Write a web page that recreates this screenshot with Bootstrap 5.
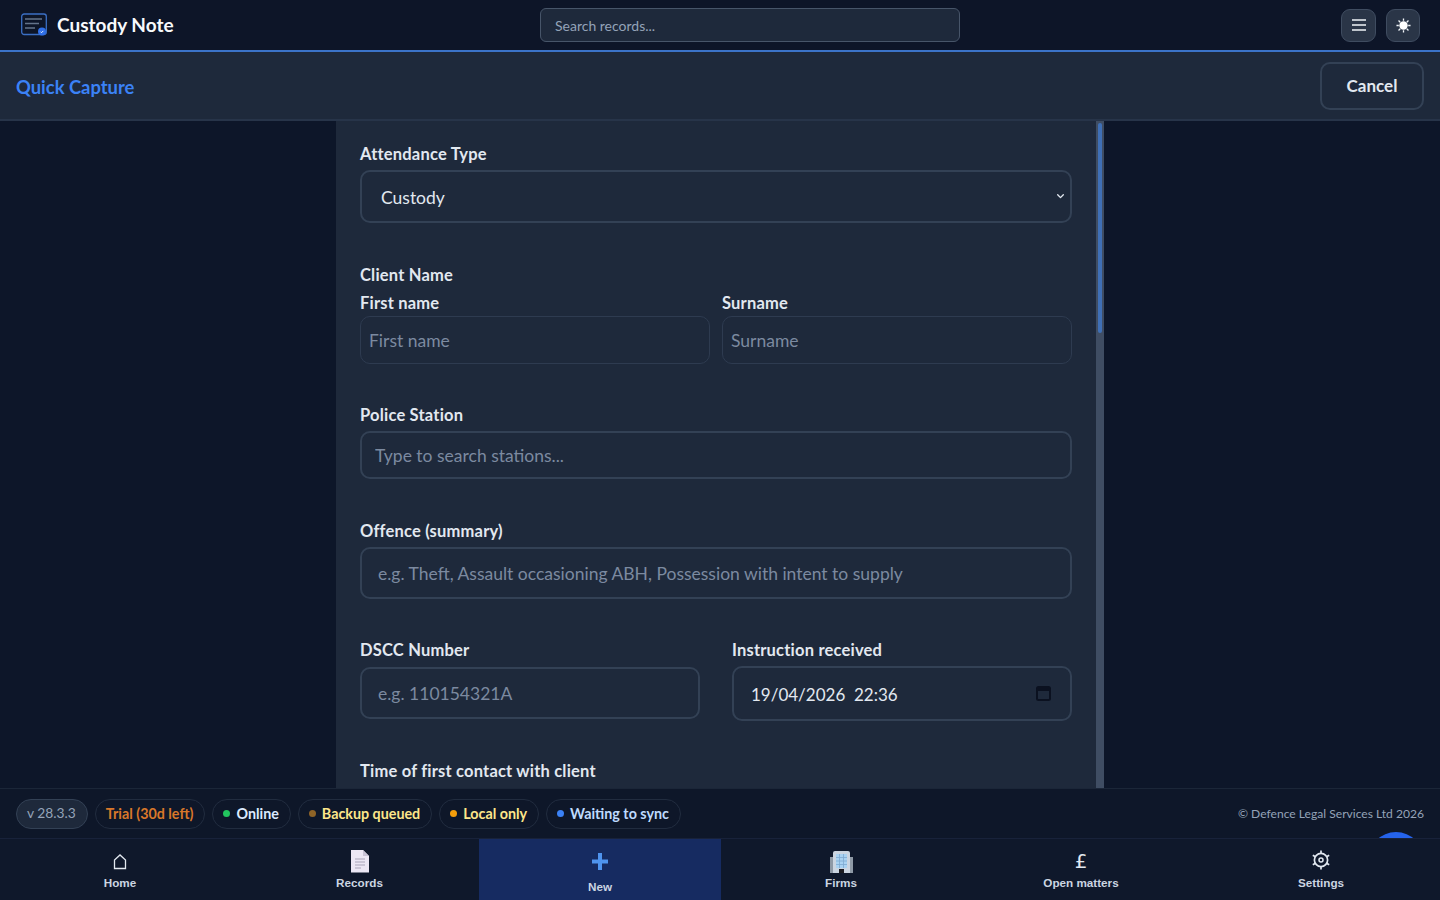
<!DOCTYPE html>
<html lang="en">
<head>
  <meta charset="UTF-8">
  <title>Custody Note</title>
  <link href="https://cdn.jsdelivr.net/npm/bootstrap@5.3.3/dist/css/bootstrap.min.css" rel="stylesheet">
  <style>
    html, body { height: 100%; }
    body { background: #0f172a; color: #e2e8f0; font-family: "Lato", "Noto Sans", sans-serif; overflow: hidden; }
    .app-shell { height: 100vh; }

    .top-bar { height: 52px; background: #0d1528; border-bottom: 2px solid #3b73c8; padding: 0 20px 0 21px; flex: none; }
    .brand-name { font-size: 19px; font-weight: 700; color: #f8fafc; margin-left: 10px; }
    .search-box { width: 420px; height: 34px; background: #1e293b; border: 1px solid #475569; border-radius: 6px; color: #e2e8f0; font-size: 14px; padding: 0 14px; }
    .search-box::placeholder { color: #94a3b8; opacity: 1; }
    .search-box:focus { background: #1e293b; color: #e2e8f0; }
    .top-actions { gap: 10px; }
    .icon-btn { width: 35px; height: 33px; background: #2a3547; border: 1px solid #3f4c60; border-radius: 9px; padding: 0; }
    .theme-btn { width: 34px; }

    .capture-bar { height: 69px; background: #1e293b; border-bottom: 2px solid #273449; padding: 3px 16px 0; flex: none; }
    .capture-title { font-size: 18.400px; font-weight: 700; color: #3b82f6; margin: 0; }
    .cancel-btn { width: 104px; height: 48px; border: 2px solid #334155; border-radius: 10px; color: #e2e8f0; font-size: 17px; font-weight: 700; background: transparent; margin-top: -3px; }

    .work-area { min-height: 0; background: #0d1629; }
    .form-column { width: 768px; margin: 0 auto; height: 100%; background: #1e293b; position: relative; overflow: hidden; }
    .form-inner { padding: 21px 32px 0 24px; }
    .scroll-track { position: absolute; top: 0; right: 0; bottom: 0; width: 8px; background: #3f4d63; }
    .scroll-thumb { position: absolute; top: 2px; left: 2px; right: 2px; height: 210px; background: #3f6fb5; border-radius: 2px; }

    .field-label { display: block; font-size: 16.500px; letter-spacing: .2px; line-height: 22px; padding-top: 1px; font-weight: 700; color: #e2e8f0; margin-bottom: 5px; }
    .sub-label { margin-bottom: 2px; }
    .field-group { margin-bottom: 40px; }
    .group-tight { margin-bottom: 39px; }
    .group-date { margin-bottom: 38px; }
    .group-title { margin-bottom: 5px; }
    .field-input, .field-input:focus { background-color: #1e293b; color: #e2e8f0; border: 2px solid #334155; border-radius: 10px; font-size: 17.500px; box-shadow: none; }
    .field-input::placeholder { color: #7c8aa0; opacity: 1; }
    .select-field, .select-field:focus { height: 53px; padding: 4px 32px 0 19px; background-image: url("data:image/svg+xml,%3csvg xmlns='http://www.w3.org/2000/svg' viewBox='0 0 16 16'%3e%3cpath fill='none' stroke='%23e2e8f0' stroke-linecap='round' stroke-linejoin='round' stroke-width='2.4' d='m3 5 5 5 5-5'/%3e%3c/svg%3e"); background-position: right 5px center; background-size: 9px 9px; }
    .name-input, .name-input:focus { height: 48px; padding: 0 8px; border-width: 1px; border-color: #2e3b50; }
    .station-input, .station-input:focus { height: 48px; padding: 0 13px; }
    .tall-input, .tall-input:focus { height: 52px; padding: 1px 16px 0; }
    .date-input, .date-input:focus { height: 55px; padding: 1px 17px 0; font-size: 17px; }
    .name-grid { display: grid; grid-template-columns: 350px 350px; column-gap: 12px; }
    .time-grid { display: grid; grid-template-columns: 340px 340px; column-gap: 32px; align-items: start; }
    .date-wrap { position: relative; }
    .date-icon { position: absolute; right: 21px; top: 19px; }
    .dscc-wrap { padding-top: 1px; }

    .status-bar { height: 50px; background: #0e1729; border-top: 1px solid #1b2638; padding: 0 16px; flex: none; }
    .pill-row { gap: 7px; }
    .status-pill { height: 30px; display: inline-flex; align-items: center; padding: 0 11px 0 10px; border: 1px solid #212c3f; border-radius: 15px; font-size: 14.300px; font-weight: 700; white-space: nowrap; }
    .pill-version { background: #1e293b; border-color: #334155; color: #94a3b8; font-weight: 400; font-size: 13.800px; }
    .pill-trial { color: #d9772a; }
    .pill-online { color: #dbeafe; }
    .pill-backup, .pill-local { color: #fde68a; }
    .pill-sync { color: #bfdbfe; }
    .dot { width: 7px; height: 7px; border-radius: 50%; margin-right: 6px; }
    .copyright { font-size: 12.100px; color: #94a3b8; padding-top: 2px; }
    .fab-peek { position: fixed; right: 16px; bottom: 12px; width: 56px; height: 56px; border-radius: 50%; background: #2563eb; z-index: 1; }

    .bottom-nav { height: 62px; background: #0f182b; flex: none; position: relative; z-index: 2; border-top: 1px solid #18223a; }
    .nav-cell { width: 240px; flex: none; display: flex; flex-direction: column; align-items: center; color: #cbd5e1; font-family: "Liberation Sans", Arial, sans-serif; font-size: 11.700px; font-weight: 700; text-decoration: none; padding-top: 9px; }
    .nav-cell svg { display: block; height: 26px; margin-bottom: 0; }
    .nav-active { background: #162b61; width: 242px; padding-top: 11px; }
    .nav-active svg { margin-bottom: 2px; }
    .pound-glyph { display: block; height: 26px; line-height: 26px; font-family: "DejaVu Sans", sans-serif; font-size: 20px; font-weight: 400; color: #e2e8f0; }
  </style>
</head>
<body>
  <div class="app-shell d-flex flex-column">

    <!-- top bar -->
    <header class="top-bar d-flex align-items-center">
      <div class="d-flex align-items-center" style="width:519px">
        <svg width="26" height="24" viewBox="0 0 26 24" fill="none">
          <rect x="0.7" y="1" width="24.6" height="20.5" rx="2.5" stroke="#3b6fc4" stroke-width="1.3"/>
          <path d="M4 6h17M4 10.500h14M4 15h10" stroke="#64748b" stroke-width="1.3"/>
          <circle cx="21" cy="18.500" r="4" fill="#2f6fe8"/>
          <path d="M19.500 18.700l1 1 1.800-1.800" stroke="#fff" stroke-width="0.9"/>
        </svg>
        <span class="brand-name">Custody Note</span>
      </div>
      <input class="form-control search-box" type="text" placeholder="Search records...">
      <div class="ms-auto d-flex top-actions">
        <button class="btn icon-btn d-flex align-items-center justify-content-center" type="button" aria-label="Menu">
          <svg width="14" height="12" viewBox="0 0 14 12"><path d="M0 1h14M0 6h14M0 11h14" stroke="#f1f5f9" stroke-width="1.500"/></svg>
        </button>
        <button class="btn icon-btn theme-btn d-flex align-items-center justify-content-center" type="button" aria-label="Theme">
          <svg width="15" height="15" viewBox="0 0 16 16"><circle cx="8" cy="8" r="4.500" fill="#fff"/><path d="M8 0.500v2.500M8 13v2.500M0.500 8H3M13 8h2.500M2.700 2.700l1.800 1.800M11.500 11.500l1.800 1.800M2.700 13.300l1.800-1.800M11.500 4.500l1.800-1.800" stroke="#f1f5f9" stroke-width="1.400"/></svg>
        </button>
      </div>
    </header>

    <!-- page title -->
    <div class="capture-bar d-flex align-items-center justify-content-between">
      <h1 class="capture-title">Quick Capture</h1>
      <button class="btn cancel-btn" type="button">Cancel</button>
    </div>

    <!-- form -->
    <main class="work-area flex-grow-1">
      <div class="form-column">
        <form class="form-inner">
          <div class="field-group">
            <label class="field-label" for="attType">Attendance Type</label>
            <select class="form-select field-input select-field" id="attType">
              <option>Custody</option>
              <option>Voluntary</option>
            </select>
          </div>

          <div class="field-group group-tight">
            <div class="field-label group-title">Client Name</div>
            <div class="name-grid">
              <div>
                <label class="field-label sub-label" for="firstName">First name</label>
                <input class="form-control field-input name-input" id="firstName" type="text" placeholder="First name">
              </div>
              <div>
                <label class="field-label sub-label" for="surname">Surname</label>
                <input class="form-control field-input name-input" id="surname" type="text" placeholder="Surname">
              </div>
            </div>
          </div>

          <div class="field-group">
            <label class="field-label" for="station">Police Station</label>
            <input class="form-control field-input station-input" id="station" type="text" placeholder="Type to search stations...">
          </div>

          <div class="field-group group-tight">
            <label class="field-label" for="offence">Offence (summary)</label>
            <input class="form-control field-input tall-input" id="offence" type="text" placeholder="e.g. Theft, Assault occasioning ABH, Possession with intent to supply">
          </div>

          <div class="field-group group-date time-grid">
            <div>
              <label class="field-label" for="dscc">DSCC Number</label>
              <div class="dscc-wrap"><input class="form-control field-input tall-input" id="dscc" type="text" placeholder="e.g. 110154321A"></div>
            </div>
            <div>
              <label class="field-label" for="instruction">Instruction received</label>
              <div class="date-wrap">
                <input class="form-control field-input date-input" id="instruction" type="text" value="19/04/2026&nbsp;&nbsp;22:36">
                <svg class="date-icon" width="15" height="16" viewBox="0 0 15 16" fill="none"><rect x="1" y="2" width="13" height="13" rx="1.500" stroke="#0b1120" stroke-width="2"/><path d="M1 4.500h13" stroke="#0b1120" stroke-width="3"/></svg>
              </div>
            </div>
          </div>

          <div class="field-group">
            <label class="field-label" for="firstContact">Time of first contact with client</label>
          </div>
        </form>
        <div class="scroll-track"><div class="scroll-thumb"></div></div>
      </div>
    </main>

    <!-- status strip -->
    <div class="status-bar d-flex align-items-center">
      <div class="d-flex pill-row">
        <span class="status-pill pill-version">v 28.3.3</span>
        <span class="status-pill pill-trial">Trial (30d left)</span>
        <span class="status-pill pill-online"><span class="dot" style="background:#22c55e"></span>Online</span>
        <span class="status-pill pill-backup"><span class="dot" style="background:#8f6427"></span>Backup queued</span>
        <span class="status-pill pill-local"><span class="dot" style="background:#f59e0b"></span>Local only</span>
        <span class="status-pill pill-sync"><span class="dot" style="background:#3b82f6"></span>Waiting to sync</span>
      </div>
      <span class="copyright ms-auto">© Defence Legal Services Ltd 2026</span>
    </div>
    <div class="fab-peek"></div>

    <!-- bottom nav -->
    <nav class="bottom-nav d-flex">
      <a class="nav-cell" href="#">
        <svg width="14" height="26" viewBox="0 0 14 26" fill="none"><path d="M1.500 20.500V12L7 7l5.500 5v8.500z" stroke="#e2e8f0" stroke-width="1.300"/></svg>
        Home
      </a>
      <a class="nav-cell" href="#" style="width:239px">
        <svg width="20" height="26" viewBox="0 0 20 26"><path d="M1 2h12l6 6v16.500H1z" fill="#ece7f4"/><path d="M13 2l6 6h-6z" fill="#c9c3d6"/><path d="M5 11h10M5 14h10M5 17h10M5 20h6" stroke="#a9a4b8" stroke-width="1"/></svg>
        Records
      </a>
      <a class="nav-cell nav-active" href="#">
        <svg width="18" height="26" viewBox="0 0 18 26"><path d="M9 3v17M1 11.500h16" stroke="#4f94ee" stroke-width="4"/></svg>
        New
      </a>
      <a class="nav-cell" href="#">
        <svg width="25" height="26" viewBox="0 0 25 26"><path d="M4 5q0-2 2-2h13q2 0 2 2v20H4z" fill="#cbd5e1"/><path d="M1 9h3v16H1zM21 9h3v16h-3z" fill="#8e99a6"/><path d="M7 6h11v14H7z" fill="#a9d2f2"/><path d="M7 9.500h11M7 13h11M7 16.500h11M10.500 6v14M14.500 6v14" stroke="#7fa9d0" stroke-width="0.800"/><path d="M10 21h5v4h-5z" fill="#1c1c22"/></svg>
        Firms
      </a>
      <a class="nav-cell" href="#">
        <span class="pound-glyph">£</span>
        Open matters
      </a>
      <a class="nav-cell" href="#">
        <svg width="20" height="26" viewBox="0 0 20 26" fill="none"><circle cx="10" cy="12" r="6.600" stroke="#e2e8f0" stroke-width="1.700"/><circle cx="10" cy="12" r="2" stroke="#e2e8f0" stroke-width="1.500"/><path d="M10 2.500v3M10 18.500v3M1.800 7.300l2.600 1.500M15.600 15.200l2.600 1.500M1.800 16.700l2.600-1.500M15.600 8.800l2.600-1.500" stroke="#e2e8f0" stroke-width="1.700"/></svg>
        Settings
      </a>
    </nav>
  </div>

  <script src="https://cdn.jsdelivr.net/npm/bootstrap@5.3.3/dist/js/bootstrap.bundle.min.js"></script>
</body>
</html>
